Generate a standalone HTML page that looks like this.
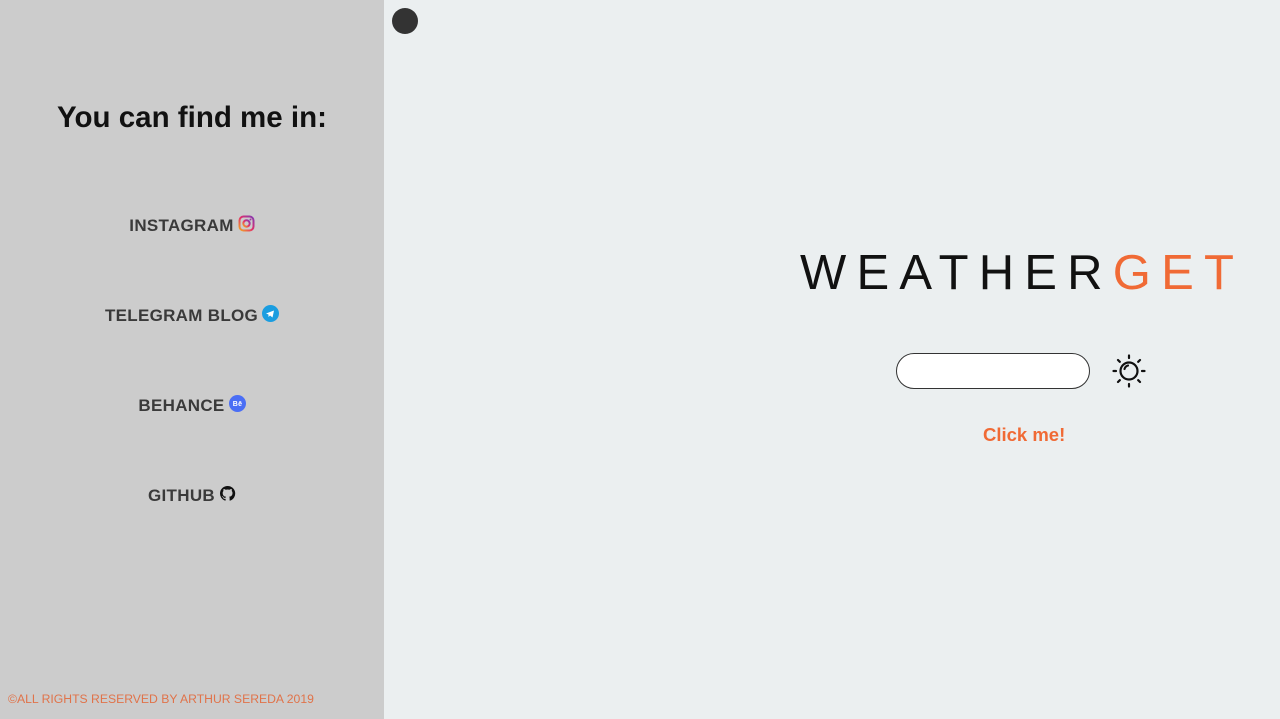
<!DOCTYPE html>
<html><head><style>
body{margin:0;width:1280px;height:719px;overflow:hidden;font-family:"Liberation Sans",sans-serif;background:#ebeff0;position:relative}
.side{position:absolute;left:0;top:0;width:384px;height:719px;background:#cccccc}
h1{position:absolute;left:0;width:384px;top:101px;margin:0;text-align:center;font-size:29.5px;font-weight:bold;color:#111}
.l{position:absolute;left:0;width:384px;text-align:center;font-size:17px;font-weight:bold;color:#3a3a3a;letter-spacing:0.3px}
.l svg{vertical-align:-1px;margin-left:4px}
.foot{position:absolute;left:8px;top:692px;font-size:12.2px;color:#e0734a}
.dot{position:absolute;left:392px;top:8px;width:26px;height:26px;border-radius:50%;background:#333}
.logo{position:absolute;left:800px;top:245px;font-size:49px;letter-spacing:10.2px;color:#111;line-height:56px}
.logo span{color:#f06a35}
.inp{position:absolute;left:896px;top:353px;width:192px;height:34px;border:1px solid #333;border-radius:18px;background:#fff}
.click{position:absolute;left:983px;top:424px;font-size:18.5px;font-weight:bold;color:#f06a35}
</style></head><body>
<div class="side">
<h1>You can find me in:</h1>
<div class="l" style="top:215px">INSTAGRAM<svg width="17" height="17" viewBox="0 0 17 17"><defs><linearGradient id="g" x1="0" y1="1" x2="1" y2="0"><stop offset="0" stop-color="#f5a623"/><stop offset=".5" stop-color="#e1306c"/><stop offset="1" stop-color="#833ab4"/></linearGradient></defs><rect x="1.5" y="1.5" width="14" height="14" rx="4" fill="none" stroke="url(#g)" stroke-width="2"/><circle cx="8.5" cy="8.5" r="3.2" fill="none" stroke="url(#g)" stroke-width="2"/><circle cx="12.5" cy="4.5" r="1" fill="#a13aa0"/></svg></div>
<div class="l" style="top:305px">TELEGRAM BLOG<svg width="17" height="17" viewBox="0 0 17 17"><circle cx="8.5" cy="8.5" r="8.5" fill="#1a9de0"/><path d="M4 8.5l8-3-1.5 7-2.5-2-1.5 1.5v-2.5z" fill="#fff"/></svg></div>
<div class="l" style="top:395px">BEHANCE<svg width="17" height="17" viewBox="0 0 17 17"><circle cx="8.5" cy="8.5" r="8.5" fill="#4a6ef5"/><text x="8.5" y="11" font-size="7" font-weight="bold" fill="#fff" text-anchor="middle" font-family="Liberation Sans">Bē</text></svg></div>
<div class="l" style="top:485px">GITHUB<svg width="17" height="17" viewBox="0 0 17 17"><path d="M8.5 1a7.5 7.5 0 0 0-2.4 14.6c.4 0 .5-.2.5-.4v-1.4c-2.1.5-2.5-.9-2.5-.9-.4-.9-.9-1.1-.9-1.1-.7-.5 0-.5 0-.5.8 0 1.2.8 1.2.8.7 1.2 1.8.8 2.2.6 0-.5.3-.8.5-1-1.7-.2-3.4-.8-3.4-3.7 0-.8.3-1.5.8-2-.1-.2-.3-1 .1-2 0 0 .6-.2 2.1.8a7 7 0 0 1 3.8 0c1.4-1 2.1-.8 2.1-.8.4 1 .2 1.8.1 2 .5.5.8 1.2.8 2 0 2.9-1.8 3.5-3.4 3.7.3.2.5.7.5 1.4v2.1c0 .2.1.5.5.4A7.5 7.5 0 0 0 8.5 1z" fill="#111"/></svg></div>
<div class="foot">©ALL RIGHTS RESERVED BY ARTHUR SEREDA 2019</div>
</div>
<div class="dot"></div>
<div class="logo">WEATHER<span>GET</span></div>
<div class="inp"></div>
<svg style="position:absolute;left:1111px;top:353px" width="36" height="36" viewBox="0 0 36 36" stroke="#111" stroke-width="2.2" fill="none" stroke-linecap="round"><circle cx="18" cy="18" r="8.5"/><path d="M13.5 16a5 5 0 0 1 3.5-3.5"/><path d="M18 2.5v2.5M18 31v2.5M2.5 18h2.5M31 18h2.5M7 7l1.8 1.8M27.2 27.2l1.8 1.8M7 29l1.8-1.8M27.2 8.8l1.8-1.8"/></svg>
<div class="click">Click me!</div>
</body></html>
